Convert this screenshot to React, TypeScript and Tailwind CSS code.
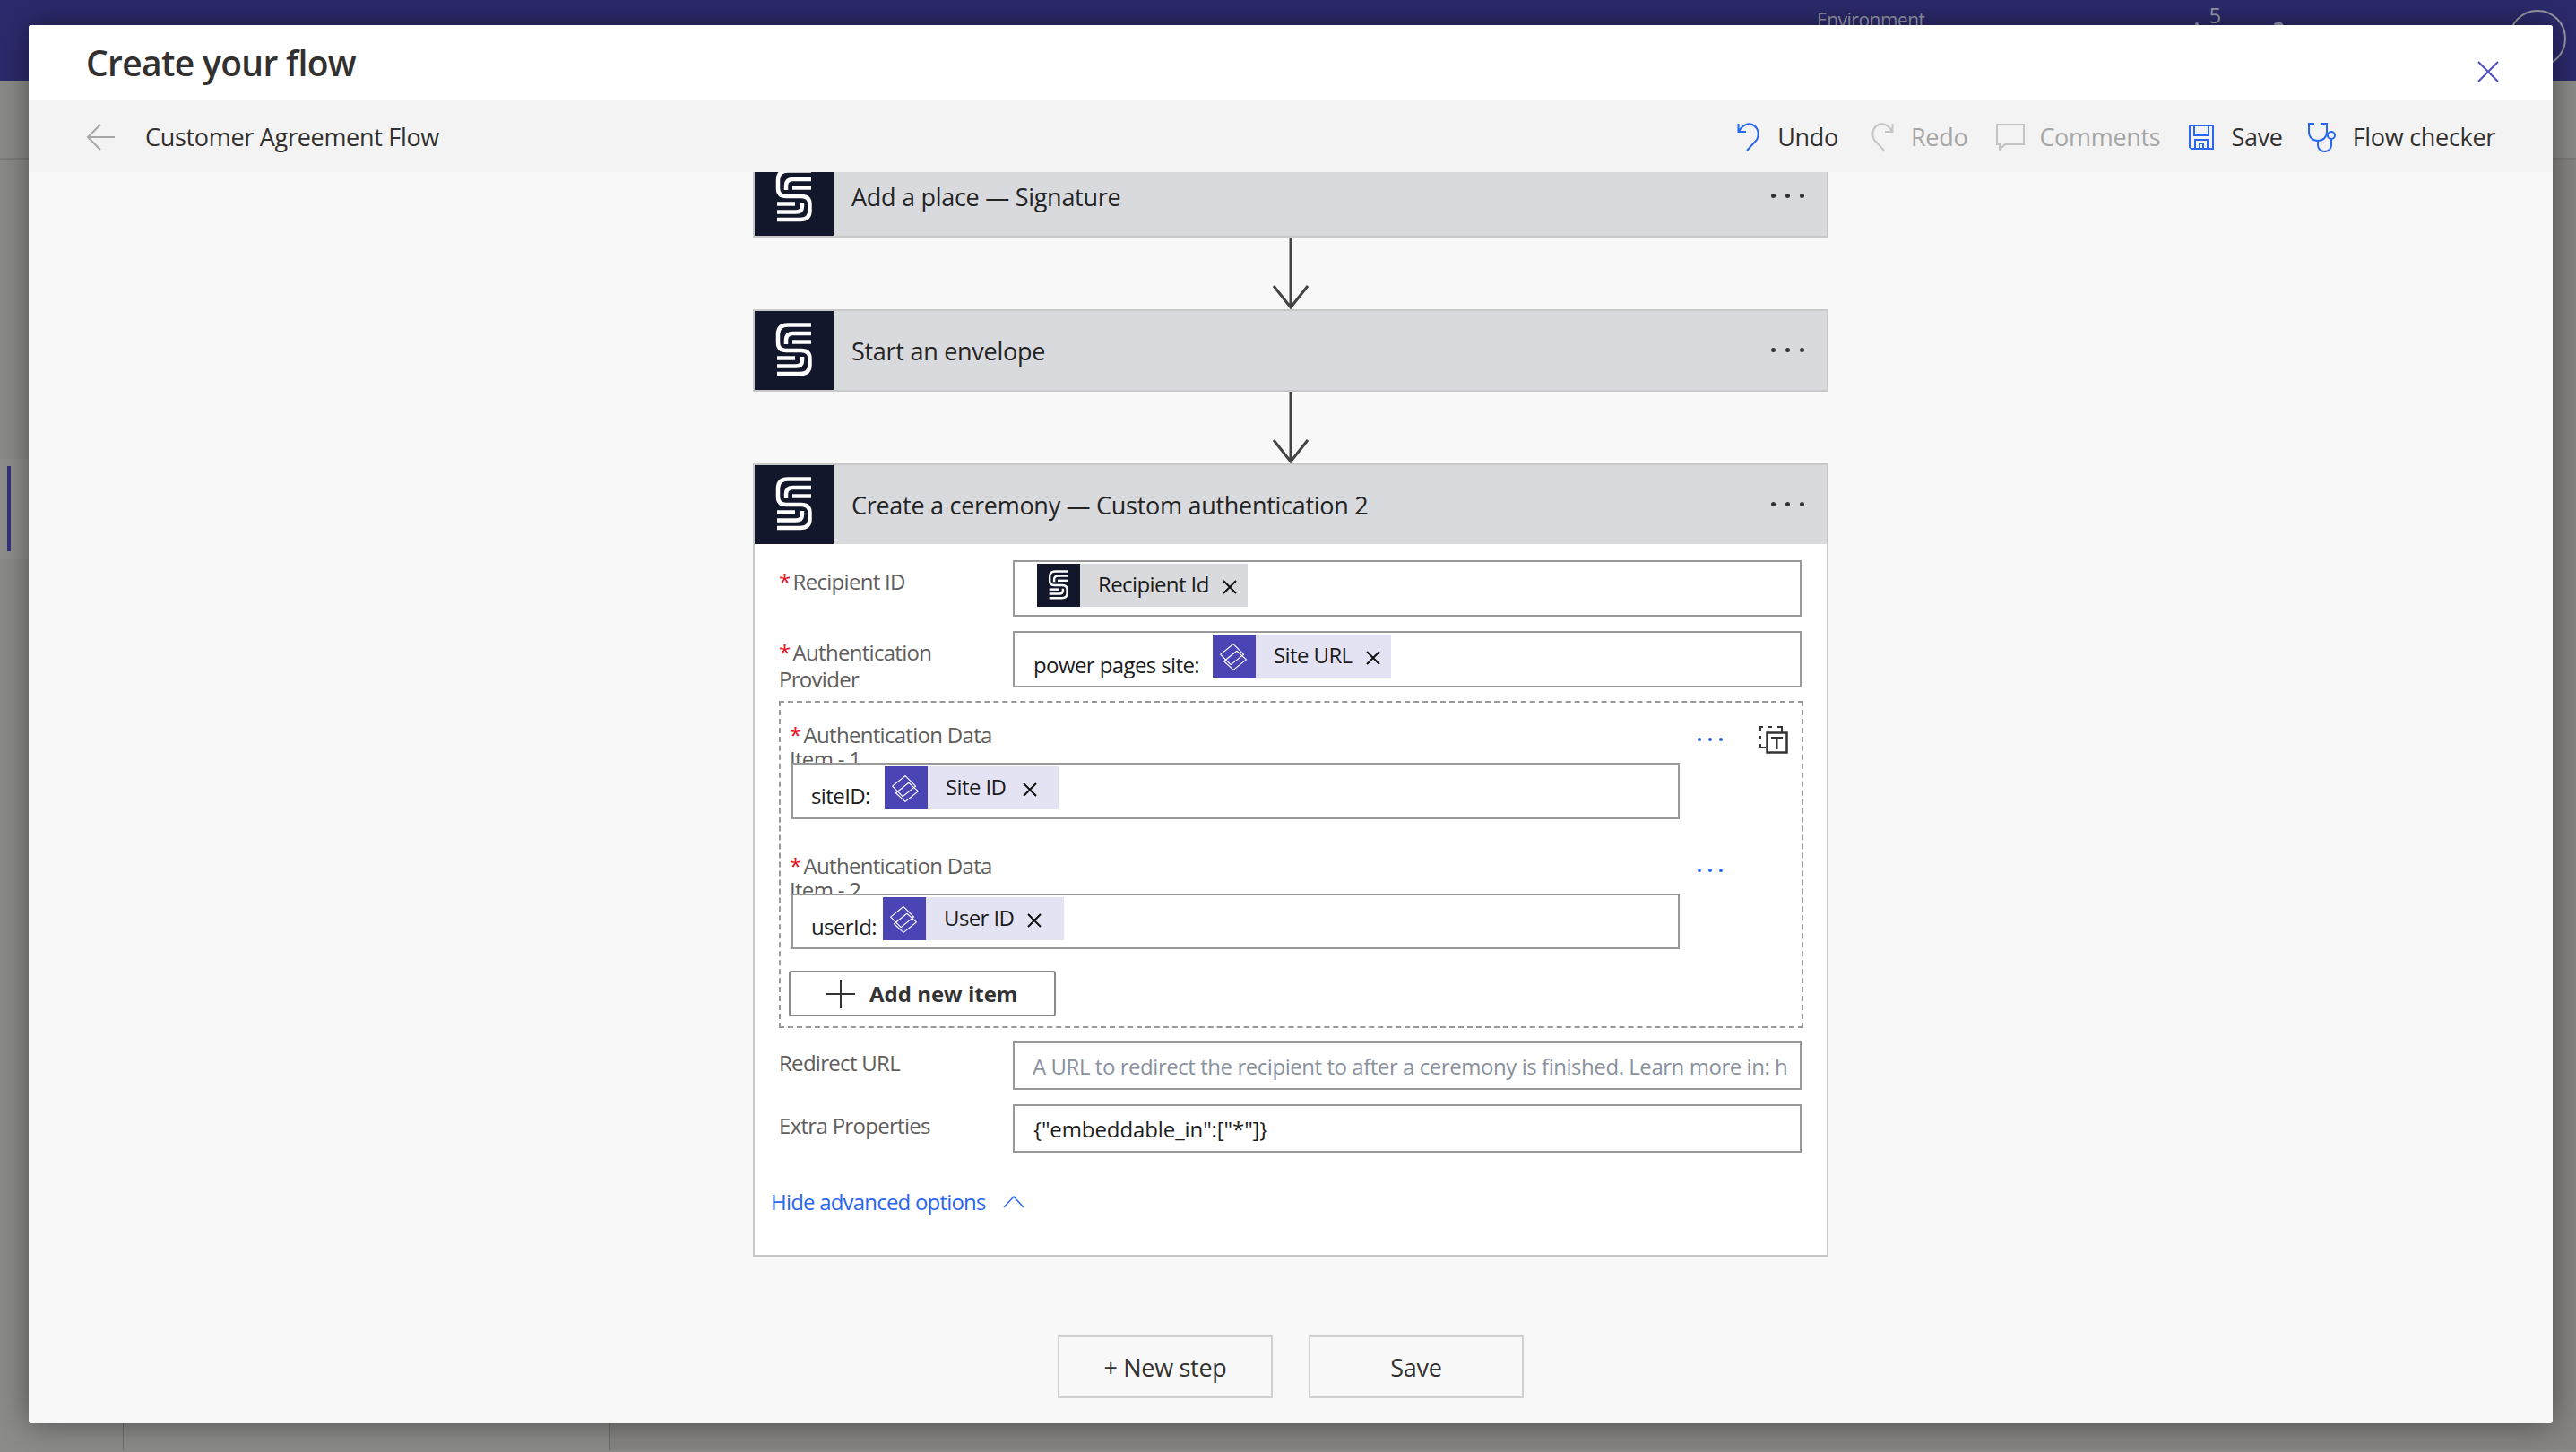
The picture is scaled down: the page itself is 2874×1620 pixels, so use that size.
import type { ReactNode } from "react";

function SignLogo({ size }: { size: number }) {
  return (
    <svg width={size} height={size} viewBox="0 0 88 88" fill="none" stroke="#fff" strokeWidth="4.5">
      <path d="M63 15.500H37Q26 15.500 26 26V35Q26 44 35 44H52Q61.500 44 61.500 53V60Q61.500 70 51 70H25" />
      <path d="M63 25H43Q35 25 35 32V37" />
      <path d="M42 34.500H63" />
      <path d="M25 52.500H45" />
      <path d="M25 61.500H46Q53 61.500 53 55V51" />
    </svg>
  );
}

function SiteLogo() {
  return (
    <svg width="48" height="48" viewBox="0 0 50 50" fill="none" stroke="#fff" strokeWidth="1.2" strokeLinejoin="round">
      <path d="M9 23L24 11L36 23L21 35Z" />
      <path d="M13 31L28 19L39 29L24 41Z" />
    </svg>
  );
}

function CloseGlyph() {
  return (
    <svg width="18" height="18" viewBox="0 0 18 18" stroke="#111" strokeWidth="2" className="mt-[17px] shrink-0">
      <path d="M2 2L16 16M16 2L2 16" />
    </svg>
  );
}

interface ChipProps {
  label: string;
  kind: "sign" | "site";
  gap?: number;
  right: number;
}

function Chip({ label, kind, gap = 14, right }: ChipProps) {
  const isSign = kind === "sign";
  return (
    <div className={`flex h-[48px] shrink-0 items-start ${isSign ? "bg-[#d9dadd]" : "bg-[#e4e3f4]"}`}>
      <div className={`flex h-[48px] w-[48px] shrink-0 items-center justify-center ${isSign ? "bg-[#12172b]" : "bg-[#4a44b5]"}`}>
        {isSign ? <SignLogo size={48} /> : <SiteLogo />}
      </div>
      <span className="ml-[20px] h-[48px] text-[24px] leading-[46px] tracking-[-0.6px] text-[#1c1c1c]" style={{ marginRight: gap }}>
        {label}
      </span>
      {/* margin on the x differs per chip in the original */}
      <div className="flex" style={{ marginRight: right }}>
        <CloseGlyph />
      </div>
    </div>
  );
}

function Label({ children, required, leading = "leading-[30px]" }: { children: ReactNode; required?: boolean; leading?: string }) {
  return (
    <div className={`text-[24px] tracking-[-0.7px] text-[#605e5c] ${leading}`}>
      {required && <span className="mr-[3px] text-[#e81123]">*</span>}
      {children}
    </div>
  );
}

function Dots({ blue }: { blue?: boolean }) {
  const dot = blue ? "h-[4px] w-[4px] rounded-full bg-[#2b66f0]" : "h-[5px] w-[5px] rounded-full bg-[#333]";
  return (
    <div className={`flex ${blue ? "gap-[8px]" : "gap-[11px]"}`}>
      <div className={dot} />
      <div className={dot} />
      <div className={dot} />
    </div>
  );
}

function CardHeader({ title }: { title: string }) {
  return (
    <div className="flex h-[88px] items-center bg-[#d9dadd]">
      <div className="flex h-[88px] w-[88px] items-center justify-center bg-[#12172b]">
        <SignLogo size={88} />
      </div>
      <div className="ml-[20px] flex-1 pt-[2px] text-[27px] tracking-[-0.28px] text-[#242424]">{title}</div>
      <div className="mr-[25px] mb-[1px]">
        <Dots />
      </div>
    </div>
  );
}

function Connector() {
  return (
    <svg width="40" height="80" viewBox="0 0 40 80" fill="none" stroke="#444" strokeWidth="3" className="mx-auto block">
      <path d="M20 0V78M1 54L20 78L39 54" />
    </svg>
  );
}

function Row({ label, required, height, children }: { label: string; required?: boolean; height: string; children: ReactNode }) {
  return (
    <div className={`flex ${height}`}>
      <div className="w-[261px] shrink-0 pt-[9px] pr-[20px]">
        <Label required={required}>{label}</Label>
      </div>
      <div className="flex-1">{children}</div>
    </div>
  );
}

function ArrayItem({ index, text, textWidth, chip, gap, right, height, icon }: {
  index: number;
  text: string;
  textWidth: number;
  chip: string;
  gap?: number;
  right: number;
  height: string;
  icon?: boolean;
}) {
  return (
    <div className="flex">
      <div className="w-[993px] shrink-0">
        <div className="w-[250px]">
          <Label required leading="leading-[27px]">{`Authentication Data Item - ${index}`}</Label>
        </div>
        <div className={`relative -mt-[9px] ml-[2px] flex items-start border-2 border-[#999] bg-white pt-[2px] pl-[20px] ${height}`}>
          <span className="mt-[18px] shrink-0 text-[24px] leading-[30px] tracking-[-0.6px] text-[#1c1c1c]" style={{ width: textWidth }}>
            {text}
          </span>
          <Chip label={chip} kind="site" gap={gap} right={right} />
        </div>
      </div>
      <div className="ml-[20px] pt-[17px]">
        <Dots blue />
      </div>
      {icon && (
        <svg width="32" height="32" viewBox="0 0 32 32" fill="none" stroke="#333" className="mt-[3px] ml-[41px]">
          <path d="M25 8V2H20M14 2H9M4 2H1V7M1 12V16M1 21V25H7" strokeWidth="2" />
          <rect x="8.500" y="8.500" width="22" height="22" fill="#fff" strokeWidth="2.500" />
          <path d="M13 14H26M19.500 14V27" strokeWidth="2" />
        </svg>
      )}
    </div>
  );
}

function ToolItem({ icon, label, disabled, gap }: { icon: ReactNode; label: string; disabled?: boolean; gap: string }) {
  return (
    <div className={`flex items-center ${gap}`}>
      {icon}
      <span className={disabled ? "text-[#a6a6a6]" : "text-[#323130]"}>{label}</span>
    </div>
  );
}

export default function App() {
  return (
    <div className="relative h-[1620px] w-[2874px] overflow-hidden bg-[#8b8b8a] font-['Open_Sans',sans-serif]">
      {/* page behind the dialog */}
      <div className="flex h-[90px] items-start bg-[#2c2a6d] text-[#9a9aad]">
        <div className="ml-[2027px] text-[21px] leading-[44px] tracking-[-0.5px]">Environment</div>
        <div className="mt-[25px] ml-[301px] h-[3px] w-[4px] rounded-t-full bg-[#9a9aad]" />
        <div className="ml-[12px] text-[24px] leading-[34px]">5</div>
        <div className="mt-[25px] ml-[59px] h-[3px] w-[10px] rounded-t-full bg-[#9a9aad]" />
        <div className="mt-[11px] ml-[252px] h-[64px] w-[64px] shrink-0 rounded-full border-2 border-[#9a9aa5]" />
      </div>
      <div className="h-[88px] border-b-2 border-[#7c7c7b]" />
      <div className="flex h-[1440px]">
        <div className="w-[138px] border-r border-[#6e6e6d]">
          <div className="mt-[334px] h-[112px] bg-[#8f8f8e] py-[8px] pl-[8px]">
            <div className="h-[95px] w-[4px] bg-[#35327a]" />
          </div>
        </div>
        <div className="w-[543px] border-r border-[#6e6e6d]" />
        <div className="flex-1 bg-[#868583]" />
      </div>

      {/* dialog */}
      <div className="absolute top-[28px] left-[32px] flex h-[1560px] w-[2816px] flex-col overflow-hidden rounded-[3px] bg-[#f8f8f8] shadow-[0_0_36px_rgba(0,0,0,0.45)]">
        <div className="flex h-[84px] shrink-0 items-center justify-between bg-white pr-[60px] pl-[64px]">
          <h1 className="text-[39px] font-semibold tracking-[-0.67px] text-[#323130]">Create your flow</h1>
          <svg width="24" height="24" viewBox="0 0 24 24" stroke="#4f4bc4" strokeWidth="2" className="mt-[20px]">
            <path d="M1 1L23 23M23 1L1 23" />
          </svg>
        </div>

        <div className="flex h-[80px] shrink-0 items-center justify-between bg-[#f3f3f3] pt-[2px] pr-[64px] pl-[64px] text-[27px] tracking-[-0.3px]">
          <div className="flex items-center gap-[33px]">
            <svg width="33" height="30" viewBox="0 0 33 30" fill="none" stroke="#a6a6a6" strokeWidth="2">
              <path d="M32 15H2M16 1L2 15L16 29" />
            </svg>
            <span className="text-[#323130]">Customer Agreement Flow</span>
          </div>
          <div className="flex items-center gap-[32px]">
            <ToolItem
              label="Undo"
              gap="gap-[19px]"
              icon={
                <svg width="26" height="32" viewBox="0 0 26 32" fill="none" stroke="#2b66f0" strokeWidth="2">
                  <path d="M1.500 1V10H10M1.500 10C5 3 12 0 17 2C24 5 25 13 22 19L11 31" />
                </svg>
              }
            />
            <ToolItem
              label="Redo"
              disabled
              gap="ml-[4px] gap-[19px]"
              icon={
                <svg width="26" height="32" viewBox="0 0 26 32" fill="none" stroke="#c4c4c4" strokeWidth="2">
                  <path d="M24.500 1V10H16M24.500 10C21 3 14 0 9 2C2 5 1 13 4 19L15 31" />
                </svg>
              }
            />
            <ToolItem
              label="Comments"
              disabled
              gap="gap-[16px]"
              icon={
                <svg width="32" height="30" viewBox="0 0 32 30" fill="none" stroke="#c4c4c4" strokeWidth="2">
                  <path d="M1 1H31V23H10L4 29V23H1Z" />
                </svg>
              }
            />
            <ToolItem
              label="Save"
              gap="gap-[19px]"
              icon={
                <svg width="28" height="28" viewBox="0 0 28 28" fill="none" stroke="#2b66f0" strokeWidth="2">
                  <path d="M1 1H27V27H3L1 25Z" />
                  <path d="M6 1V12H22V1M7 27V17H21V27M12 21V27H16V21Z" />
                </svg>
              }
            />
            <ToolItem
              label="Flow checker"
              gap="-ml-[4px] gap-[19px]"
              icon={
                <svg width="31" height="33" viewBox="0 0 31 33" fill="none" stroke="#2b66f0" strokeWidth="2">
                  <path d="M7 1H1V10C1 16 5 20 11 20C17 20 21 16 21 10V1H15" />
                  <path d="M11 20V25C11 29 14 32 18.500 32C23 32 26 29 26 25V18" />
                  <circle cx="26" cy="14" r="4" />
                </svg>
              }
            />
          </div>
        </div>

        {/* flow canvas, scrolled so the first card is cut off */}
        <div className="flex-1 overflow-hidden">
          <div className="mx-auto -mt-[19px] w-[1200px]">
            <div className="border-2 border-[#c8c8c8]">
              <CardHeader title="Add a place — Signature" />
            </div>
            <Connector />
            <div className="border-2 border-[#c8c8c8]">
              <CardHeader title="Start an envelope" />
            </div>
            <Connector />
            <div className="border-2 border-[#c8c8c8] bg-white">
              <CardHeader title="Create a ceremony — Custom authentication 2" />
              <div className="pt-[18px] pr-[28px] pb-[44px] pl-[27px]">
                <Row label="Recipient ID" required height="h-[63px]">
                  <div className="flex h-[63px] items-start border-2 border-[#999] pt-[2px] pl-[25px]">
                    <Chip label="Recipient Id" kind="sign" right={11} />
                  </div>
                </Row>
                <div className="mt-[16px]">
                  <Row label="Authentication Provider" required height="h-[63px]">
                    <div className="flex h-[63px] items-start border-2 border-[#999] pt-[2px] pl-[21px]">
                      <span className="mt-[19px] w-[200px] shrink-0 text-[24px] leading-[30px] tracking-[-0.6px] text-[#1c1c1c]">
                        power pages site:
                      </span>
                      <Chip label="Site URL" kind="site" right={11} />
                    </div>
                  </Row>
                </div>

                <div className="mt-[15px] -mr-[2px] h-[365px] border-2 border-dashed border-[#999] pt-[22px] pl-[10px]">
                  <ArrayItem index={1} text="siteID:" textWidth={82} chip="Site ID" gap={18} right={23} height="h-[63px]" icon />
                  <div className="mt-[38px]">
                    <ArrayItem index={2} text="userId:" textWidth={80} chip="User ID" right={24} height="h-[62px]" />
                  </div>
                  <button
                    type="button"
                    className="mt-[24px] -ml-[1px] flex h-[51px] w-[298px] items-center rounded-[3px] border-2 border-[#8a8a8a] bg-white pl-[40px] text-[24px] font-bold text-[#333]"
                  >
                    <svg width="32" height="32" viewBox="0 0 32 32" stroke="#333" strokeWidth="2" className="mr-[16px] shrink-0">
                      <path d="M16 0V32M0 16H32" />
                    </svg>
                    Add new item
                  </button>
                </div>

                <div className="mt-[15px]">
                  <Row label="Redirect URL" height="h-[54px]">
                    <div className="h-[54px] overflow-hidden border-2 border-[#999] pl-[20px] text-[24px] leading-[52px] tracking-[-0.45px] whitespace-nowrap text-[#8a919e]">
                      A URL to redirect the recipient to after a ceremony is finished. Learn more in: h
                    </div>
                  </Row>
                </div>
                <div className="mt-[16px]">
                  <Row label="Extra Properties" height="h-[54px]">
                    <div className="h-[54px] border-2 border-[#999] pl-[21px] text-[24px] leading-[52px] tracking-[-0.1px] text-[#1c1c1c]">
                      {'{"embeddable_in":["*"]}'}
                    </div>
                  </Row>
                </div>

                <div className="mt-[40px] -ml-[9px] flex items-center gap-[19px] text-[24px] leading-[30px] tracking-[-0.8px] text-[#2b66f0]">
                  Hide advanced options
                  <svg width="24" height="14" viewBox="0 0 24 14" fill="none" stroke="#2b66f0" strokeWidth="1.500">
                    <path d="M1 13L12 1L23 13" />
                  </svg>
                </div>
              </div>
            </div>

            <div className="mt-[88px] flex justify-center gap-[40px] text-[27px] tracking-[-0.3px] text-[#323130]">
              <button type="button" className="h-[70px] w-[240px] border-2 border-[#d0d0d0] pt-[2px]">
                + New step
              </button>
              <button type="button" className="h-[70px] w-[240px] border-2 border-[#d0d0d0] pt-[2px]">
                Save
              </button>
            </div>
          </div>
        </div>
      </div>
    </div>
  );
}
